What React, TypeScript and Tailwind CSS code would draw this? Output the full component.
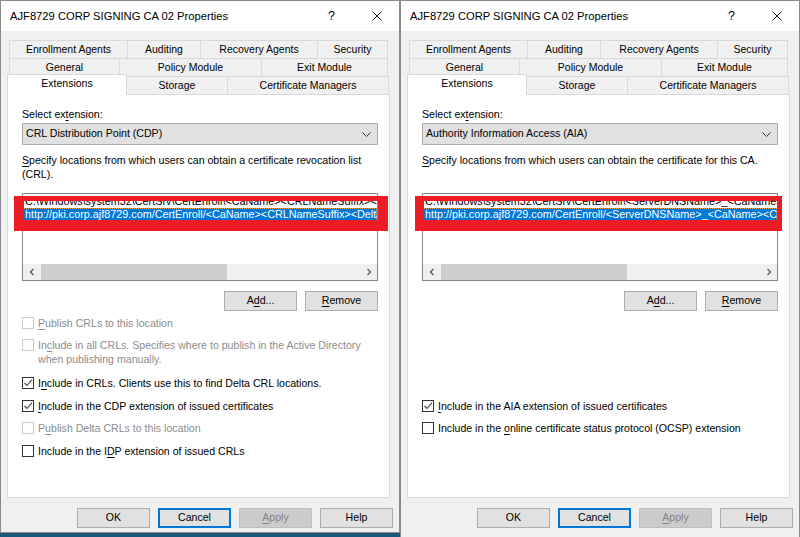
import React from "react";

type CheckItem = {
  label: React.ReactNode;
  checked?: boolean;
  disabled?: boolean;
  mt: string;
};

function U({ children }: { children: React.ReactNode }) {
  return <span className="underline underline-offset-[2px]">{children}</span>;
}

function Tab({ w, children, first }: { w: string; children: React.ReactNode; first?: boolean }) {
  return (
    <div
      className={`${w} ${first ? "border-l" : ""} flex h-full items-center justify-center border-t border-r border-[#d9d9d9] text-[10.5px]`}
    >
      {children}
    </div>
  );
}

function Btn({
  children,
  focused,
  disabled,
}: {
  children: React.ReactNode;
  focused?: boolean;
  disabled?: boolean;
}) {
  let cls = "border border-[#adadad] bg-[#e1e1e1] text-black";
  if (focused) cls = "border-2 border-[#0078d7] bg-[#e1e1e1] text-black";
  if (disabled) cls = "border border-[#bfbfbf] bg-[#cccccc] text-[#838383]";
  return (
    <div className={`flex h-[20px] w-[73px] items-center justify-center text-[10.6px] ${cls}`}>
      {children}
    </div>
  );
}

function Box({ checked, disabled }: { checked?: boolean; disabled?: boolean }) {
  return (
    <span
      className={`mt-[1px] flex h-[12px] w-[12px] shrink-0 items-center justify-center border bg-white ${
        disabled ? "border-[#cccccc]" : "border-[#333333]"
      }`}
    >
      {checked && (
        <svg viewBox="0 0 10 10" className="h-[10px] w-[10px]">
          <path d="M1.5 5 L4 7.5 L8.8 1.8" fill="none" stroke="#444444" strokeWidth="1.1" />
        </svg>
      )}
    </span>
  );
}

function Chevron({ dir }: { dir: "left" | "right" }) {
  return (
    <svg viewBox="0 0 6 8" className="h-[8px] w-[6px]">
      <path
        d={dir === "left" ? "M4.5 1 L1.5 4 L4.5 7" : "M1.5 1 L4.5 4 L1.5 7"}
        fill="none"
        stroke="#606060"
        strokeWidth="1.4"
      />
    </svg>
  );
}

function Dialog({
  ext,
  desc,
  rows,
  red,
  checks,
  h,
}: {
  ext: string;
  desc: React.ReactNode;
  rows: [string, string];
  red: string;
  checks: CheckItem[];
  h: string;
}) {
  return (
    <div className={`flex w-[400px] shrink-0 flex-col border border-[#8a8a8a] bg-[#f0f0f0] ${h}`}>
      {/* title bar */}
      <div className="flex h-[30px] shrink-0 items-center bg-white">
        <span className="pl-[9px] text-[11.2px] text-black">AJF8729 CORP SIGNING CA 02 Properties</span>
        <div className="flex-1" />
        <span className="flex w-[45px] justify-center text-[12.5px] text-black">?</span>
        <span className="flex w-[45px] items-center justify-center">
          <svg viewBox="0 0 10 10" className="h-[10px] w-[10px]">
            <path d="M0.5 0.5 L9.5 9.5 M9.5 0.5 L0.5 9.5" stroke="#111111" strokeWidth="1" />
          </svg>
        </span>
      </div>

      <div className="flex flex-col pl-[6px] pt-[9px]">
        {/* tabs */}
        <div className="ml-[2px] flex h-[18px]">
          <Tab w="w-[119px]" first>
            Enrollment Agents
          </Tab>
          <Tab w="w-[73px]">Auditing</Tab>
          <Tab w="w-[117px]">Recovery Agents</Tab>
          <Tab w="w-[70px]">Security</Tab>
        </div>
        <div className="ml-[2px] flex h-[18px]">
          <Tab w="w-[111px]" first>
            General
          </Tab>
          <Tab w="w-[142px]">Policy Module</Tab>
          <Tab w="w-[126px]">Exit Module</Tab>
        </div>
        <div className="relative z-10 flex h-[18px] items-end">
          <div className="-mb-[1px] flex h-[21px] w-[120px] items-start justify-center border-t border-l border-r border-[#d9d9d9] bg-white pt-[1px] text-[10.5px]">
            Extensions
          </div>
          <div className="h-[18px]">
            <Tab w="w-[101px]">Storage</Tab>
          </div>
          <div className="h-[18px]">
            <Tab w="w-[161px]">Certificate Managers</Tab>
          </div>
        </div>

        {/* panel */}
        <div className="flex h-[404px] w-[383px] flex-col border border-[#d9d9d9] bg-white pl-[14px] pt-[12px] text-[10.6px]">
          <div className="h-[14px] leading-[14px]">
            Select ex<U>t</U>ension:
          </div>
          <div className="mt-[2px] flex h-[22px] w-[356px] items-center border border-[#adadad] bg-[#e1e1e1] pl-[3px] pr-[6px]">
            <span className="flex-1">{ext}</span>
            <svg viewBox="0 0 9 5" className="h-[5px] w-[9px]">
              <path d="M0.5 0.5 L4.5 4.5 L8.5 0.5" fill="none" stroke="#333333" strokeWidth="1" />
            </svg>
          </div>
          <div className="mt-[8px] h-[28px] w-[360px] leading-[14px]">{desc}</div>

          {/* list */}
          <div className="relative mt-[12px] flex h-[88px] w-[356px] flex-col border border-[#828790] bg-white">
            <div className="flex-1 overflow-hidden pt-[1px] text-[10.8px]">
              <div className="h-[13px] whitespace-nowrap pl-[2px] leading-[13px]">{rows[0]}</div>
              <div className="h-[13px] whitespace-nowrap border border-dotted border-[#f0a848] bg-[#0078d7] pl-[1px] leading-[11px] text-white">
                {rows[1]}
              </div>
            </div>
            <div className="flex h-[16px] shrink-0 items-stretch bg-[#f0f0f0]">
              <div className="flex w-[17px] items-center justify-center">
                <Chevron dir="left" />
              </div>
              <div className="ml-[1px] w-[186px] bg-[#cdcdcd]" />
              <div className="flex-1" />
              <div className="flex w-[17px] items-center justify-center">
                <Chevron dir="right" />
              </div>
            </div>
            <div className={`pointer-events-none absolute z-20 border-[#ed1c24] ${red}`} />
          </div>

          <div className="mt-[10px] flex w-[356px] justify-end gap-[8px]">
            <Btn>
              A<U>d</U>d...
            </Btn>
            <Btn>
              <U>R</U>emove
            </Btn>
          </div>

          <div className="flex flex-col">
            {checks.map((c, i) => (
              <div key={i} className={`flex items-start gap-[4px] ${c.mt}`}>
                <Box checked={c.checked} disabled={c.disabled} />
                <div className={`leading-[14px] ${c.disabled ? "text-[#8c8c8c]" : "text-black"}`}>
                  {c.label}
                </div>
              </div>
            ))}
          </div>
        </div>

        {/* bottom buttons */}
        <div className="mt-[10px] flex justify-end gap-[8px] pr-[6px]">
          <Btn>OK</Btn>
          <Btn focused>Cancel</Btn>
          <Btn disabled>
            <U>A</U>pply
          </Btn>
          <Btn>Help</Btn>
        </div>
      </div>
    </div>
  );
}

export default function App() {
  return (
    <div className="flex h-[537px] w-[800px] items-start overflow-hidden bg-[#17587a] font-['Liberation_Sans',Arial,sans-serif] text-black">
      <Dialog
        h="h-[533px]"
        ext="CRL Distribution Point (CDP)"
        desc={
          <>
            <U>S</U>pecify locations from which users can obtain a certificate revocation list
            <br />
            (CRL).
          </>
        }
        rows={[
          "C:\\Windows\\system32\\CertSrv\\CertEnroll\\<CaName><CRLNameSuffix><DeltaCRLAllowed>.crl",
          "http://pki.corp.ajf8729.com/CertEnroll/<CaName><CRLNameSuffix><DeltaCRLAllowed>.crl",
        ]}
        red="left-[-9px] top-[2px] h-[35px] w-[374px] border-t-[5px] border-l-[10px] border-r-[10px] border-b-[11px]"
        checks={[
          {
            mt: "mt-[5px]",
            disabled: true,
            label: (
              <>
                <U>P</U>ublish CRLs to this location
              </>
            ),
          },
          {
            mt: "mt-[8px]",
            disabled: true,
            label: (
              <>
                In<U>c</U>lude in all CRLs. Specifies where to publish in the Active Directory
                <br />
                when publishing manually.
              </>
            ),
          },
          {
            mt: "mt-[10px]",
            checked: true,
            label: (
              <>
                I<U>n</U>clude in CRLs. Clients use this to find Delta CRL locations.
              </>
            ),
          },
          {
            mt: "mt-[9px]",
            checked: true,
            label: (
              <>
                <U>I</U>nclude in the CDP extension of issued certificates
              </>
            ),
          },
          {
            mt: "mt-[8px]",
            disabled: true,
            label: (
              <>
                P<U>u</U>blish Delta CRLs to this location
              </>
            ),
          },
          {
            mt: "mt-[9px]",
            label: (
              <>
                Include in the I<U>D</U>P extension of issued CRLs
              </>
            ),
          },
        ]}
      />
      <Dialog
        h="h-[540px]"
        ext="Authority Information Access (AIA)"
        desc={
          <>
            <U>S</U>pecify locations from which users can obtain the certificate for this CA.
          </>
        }
        rows={[
          "C:\\Windows\\system32\\CertSrv\\CertEnroll\\<ServerDNSName>_<CaName><CertificateName>.crt",
          "http://pki.corp.ajf8729.com/CertEnroll/<ServerDNSName>_<CaName><CertificateName>.crt",
        ]}
        red="left-[-8px] top-[2px] h-[35px] w-[367px] border-t-[5px] border-l-[9px] border-r-[5px] border-b-[11px]"
        checks={[
          {
            mt: "mt-[88px]",
            checked: true,
            label: (
              <>
                <U>I</U>nclude in the AIA extension of issued certificates
              </>
            ),
          },
          {
            mt: "mt-[8px]",
            label: (
              <>
                Include in the <U>o</U>nline certificate status protocol (OCSP) extension
              </>
            ),
          },
        ]}
      />
    </div>
  );
}
